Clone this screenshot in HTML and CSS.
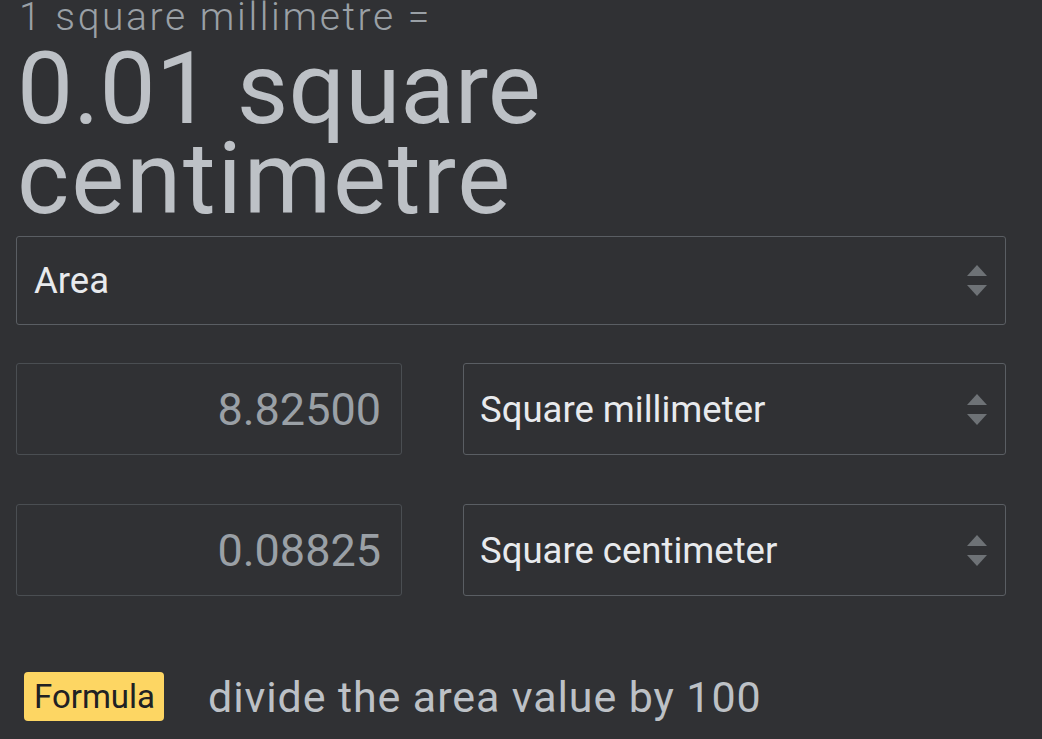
FILE: index.html
```html
<!DOCTYPE html>
<html lang="en">
  <head>
    <meta charset="UTF-8" />
    <meta name="viewport" content="width=device-width, initial-scale=1.0" />
    <title>Unit converter</title>
    <link rel="stylesheet" href="styles.css">
  </head>
  <body>
    <div class="converter">
      <div class="equation">1 square millimetre =</div>
      <div class="result">
        <span class="result-line">0.01 square</span>
        <span class="result-line result-unit">centimetre</span>
      </div>

      <div class="select select-wide">
        <span>Area</span>
        <svg class="arrows" width="20" height="31" viewBox="0 0 20 31">
          <path d="M10 0 L20 11 L0 11 Z" />
          <path d="M0 20 L20 20 L10 31 Z" />
        </svg>
      </div>

      <div class="row first-row">
        <div class="value">8.82500</div>
        <div class="select">
          <span>Square millimeter</span>
          <svg class="arrows" width="20" height="31" viewBox="0 0 20 31">
            <path d="M10 0 L20 11 L0 11 Z" />
            <path d="M0 20 L20 20 L10 31 Z" />
          </svg>
        </div>
      </div>

      <div class="row second-row">
        <div class="value">0.08825</div>
        <div class="select">
          <span>Square centimeter</span>
          <svg class="arrows" width="20" height="31" viewBox="0 0 20 31">
            <path d="M10 0 L20 11 L0 11 Z" />
            <path d="M0 20 L20 20 L10 31 Z" />
          </svg>
        </div>
      </div>

      <div class="formula">
        <span class="badge">Formula</span>
        <span class="formula-text">divide the area value by 100</span>
      </div>
    </div>
  </body>
</html>
```

FILE: styles.css
```css
body {
  margin: 0;
  background-color: #303134;
  font-family: Roboto, "Noto Sans", sans-serif;
  overflow: hidden;
}

.converter {
  padding-left: 16px;
  width: 990px;
}

.equation {
  font-size: 39px;
  font-weight: 300;
  line-height: 39px;
  letter-spacing: 2.6px;
  color: #9aa0a6;
  margin-top: -2px;
  padding-left: 3px;
  white-space: nowrap;
}

.result {
  font-size: 100px;
  line-height: 90px;
  color: #bdc1c6;
  margin-top: 7px;
  padding-left: 1px;
}

.result-line {
  display: block;
  white-space: nowrap;
}

.result-unit {
  letter-spacing: 1.8px;
}

.select {
  display: flex;
  align-items: center;
  justify-content: space-between;
  border: 1px solid #5a5e63;
  border-radius: 3px;
  box-sizing: border-box;
  color: #e8eaed;
  font-size: 36.5px;
  padding: 0 18px 0 16px;
}

.select-wide {
  margin-top: 12px;
  height: 89px;
  padding-left: 17px;
}

.arrows {
  fill: #6e7276;
  flex-shrink: 0;
}

.row {
  display: flex;
  gap: 61px;
  height: 92px;
}

.first-row {
  margin-top: 38px;
}

.second-row {
  margin-top: 49px;
}

.value {
  width: 386px;
  box-sizing: border-box;
  border: 1px solid #4a4e52;
  border-radius: 3px;
  color: #9aa0a6;
  font-size: 45px;
  padding-right: 20px;
  display: flex;
  align-items: center;
  justify-content: flex-end;
}

.row .select {
  flex: 1;
}

.formula {
  display: flex;
  align-items: center;
  gap: 44px;
  margin-top: 74px;
  padding-left: 8px;
}

.badge {
  background-color: #fdd663;
  color: #202124;
  font-size: 33px;
  line-height: 49px;
  padding: 0 9px 0 10px;
  border-radius: 4px;
}

.formula-text {
  color: #bdc1c6;
  font-size: 43px;
  letter-spacing: 0.9px;
  padding-top: 2px;
}
```
